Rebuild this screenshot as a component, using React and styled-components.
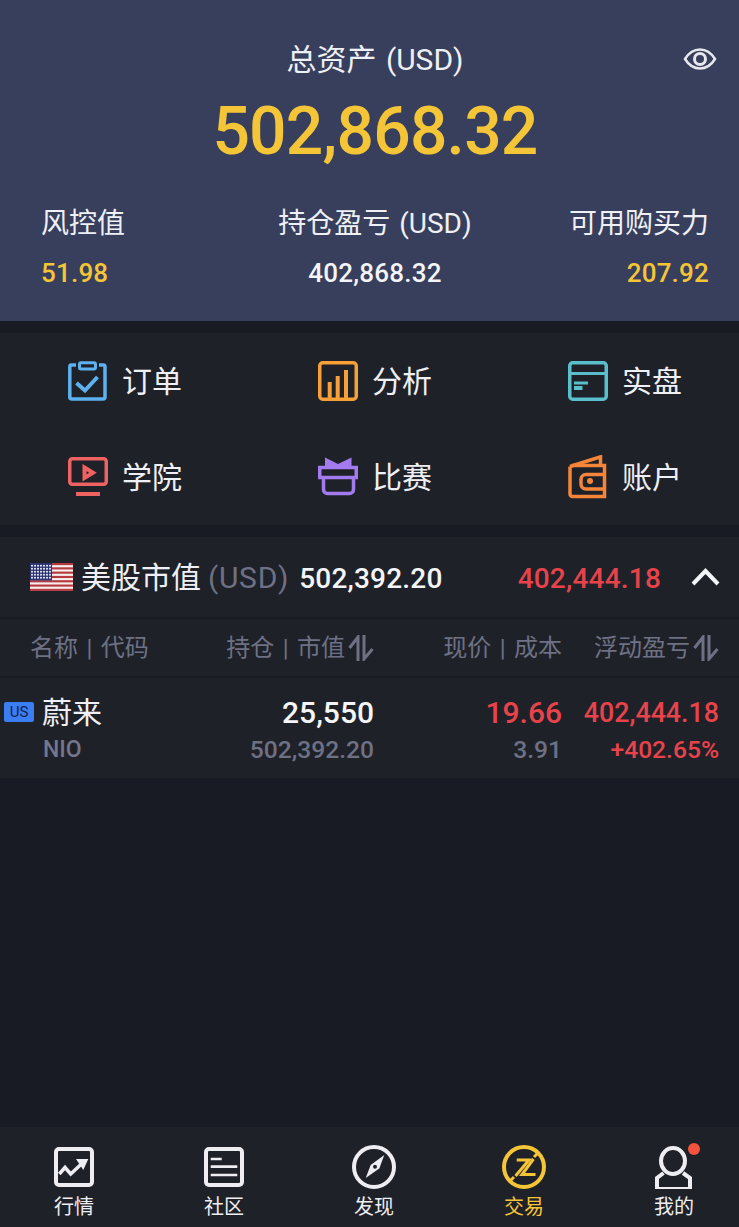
import styled, { createGlobalStyle } from "styled-components";

const RED = "#e8434a";
const GOLD = "#f5c538";
const GRAY = "#6e7184";
const PANEL = "#1f2129";

const GlobalCSS = createGlobalStyle`
    html, body {
        margin: 0;
        padding: 0;
        background: #191b24;
    }
    body {
        font-family: Roboto, "Noto Sans CJK SC", sans-serif;
        overflow: hidden;
    }
`;

const PageCSS = styled.div`
    display: flex;
    flex-direction: column;
    width: 739px;
    height: 1227px;
    background: #191b24;
`;

/* top summary */
const SummaryCSS = styled.header`
    position: relative;
    box-sizing: border-box;
    height: 321px;
    padding: 38px 30px 0 41px;
    background: #383f5c;
    color: #eef0f5;
    text-align: center;
`;
const SummaryTitle = styled.div`
    font-size: 30px;
    line-height: 44px;
    word-spacing: 2px;
`;
const BigNumber = styled.div`
    margin-top: 12px;
    font-size: 66px;
    line-height: 76px;
    font-weight: 500;
    letter-spacing: -0.8px;
    color: ${GOLD};
`;
const EyeIcon = styled.svg`
    position: absolute;
    top: 42px;
    left: 683px;
`;
const StatsRow = styled.div`
    display: grid;
    grid-template-columns: 1fr 1fr 1fr;
    margin-top: 34px;
`;
const StatCell = styled.div`
    text-align: ${(p) => p.$align};
    white-space: nowrap;
`;
const StatLabel = styled.div`
    font-size: 28px;
    line-height: 40px;
    word-spacing: 2px;
`;
const StatValue = styled.div`
    margin-top: 9px;
    font-size: 26px;
    line-height: 40px;
    font-weight: 500;
    letter-spacing: 0.2px;
    color: ${(p) => p.$color};
`;

/* shortcut grid */
const MenuGrid = styled.nav`
    display: grid;
    grid-template-columns: 250px 250px 1fr;
    grid-auto-rows: 96px;
    margin-top: 12px;
    padding-left: 68px;
    background: ${PANEL};
`;
const MenuItem = styled.div`
    display: flex;
    align-items: center;
    font-size: 30px;
    color: #eef0f5;
`;
const MenuIconBox = styled.div`
    display: flex;
    align-items: center;
    width: 40px;
    height: 44px;
    margin-right: 14px;
`;
const MenuLabel = styled.span`
    margin-bottom: 4px;
`;

/* positions */
const PositionsCSS = styled.section`
    margin-top: 12px;
    background: ${PANEL};
`;
const MarketRow = styled.div`
    display: flex;
    align-items: center;
    box-sizing: border-box;
    height: 82px;
    padding: 0 19px 0 30px;
    border-bottom: 2px solid #191b22;
`;
const MarketName = styled.span`
    margin: 0 0 4px 8px;
    font-size: 30px;
    color: #eef0f5;
`;
const MarketCurrency = styled.span`
    margin-left: 7px;
    font-size: 30px;
    letter-spacing: 0.7px;
    color: ${GRAY};
`;
const MarketValue = styled.span`
    margin: 3px 0 0 10px;
    font-size: 28px;
    font-weight: 500;
    letter-spacing: 0.2px;
    color: #f4f5f8;
`;
const MarketProfit = styled.span`
    margin: 3px 0 0 auto;
    font-size: 28px;
    font-weight: 500;
    letter-spacing: 0.2px;
    color: ${RED};
`;
const Chevron = styled.svg`
    margin-left: 30px;
`;
const TableGrid = styled.div`
    display: grid;
    grid-template-columns: 200px 174px 188px 157px;
    box-sizing: border-box;
    padding-right: 20px;
    height: ${(p) => p.$height}px;
    align-items: center;
    border-bottom: ${(p) => (p.$line ? "2px solid #191b22" : "none")};
`;
const HeadCell = styled.div`
    display: flex;
    align-items: center;
    justify-content: ${(p) => (p.$left ? "flex-start" : "flex-end")};
    padding-left: ${(p) => (p.$left ? "30px" : "0")};
    font-size: 24px;
    word-spacing: 2.5px;
    color: ${GRAY};
    white-space: nowrap;
`;
const HeadLabel = styled.span`
    margin-bottom: 4px;
`;
const SortIcon = styled.svg`
    margin-left: 3px;
`;
const NameCell = styled.div`
    position: relative;
    padding: 3px 0 0 42px;
`;
const MarketBadge = styled.span`
    position: absolute;
    left: 4px;
    top: 12px;
    width: 30px;
    height: 20px;
    border-radius: 2px;
    background: #3b7df2;
    color: #10234f;
    font-size: 15px;
    line-height: 20px;
    text-align: center;
`;
const StockName = styled.div`
    font-size: 30px;
    line-height: 40px;
    color: #eef0f5;
`;
const StockCode = styled.div`
    margin-left: 1px;
    font-size: 23px;
    line-height: 34px;
    font-weight: 500;
    color: #74778b;
`;
const NumberCell = styled.div`
    padding-top: 4px;
    text-align: right;
    white-space: nowrap;
`;
const MainNumber = styled.div`
    font-size: ${(p) => p.$size}px;
    line-height: 40px;
    font-weight: 500;
    color: ${(p) => p.$color};
`;
const SubNumber = styled.div`
    font-size: 24.6px;
    line-height: 34px;
    font-weight: 500;
    color: ${(p) => p.$color};
`;

/* tab bar */
const Spacer = styled.div`
    flex: 1;
`;
const TabBar = styled.nav`
    display: grid;
    grid-template-columns: repeat(5, 44px);
    gap: 106px;
    box-sizing: border-box;
    height: 100px;
    padding-left: 52px;
    background: ${PANEL};
`;
const Tab = styled.div`
    position: relative;
    display: flex;
    flex-direction: column;
    align-items: center;
    padding-top: 18px;
    font-size: 20px;
    line-height: 28px;
    color: ${(p) => (p.$active ? GOLD : "#eeeef2")};
`;
const TabIconBox = styled.div`
    display: flex;
    align-items: center;
    justify-content: center;
    height: 44px;
    margin-bottom: 4px;
`;
const TabDot = styled.span`
    position: absolute;
    top: 16px;
    left: 36px;
    width: 12px;
    height: 12px;
    border-radius: 50%;
    background: #f4533d;
`;

const OrderIcon = () => (
    <svg width="40" height="40" viewBox="0 0 40 40" fill="none" stroke="#5db1ef" strokeWidth="3.5">
        <path d="M8 4H3.5a1.7 1.7 0 0 0-1.7 1.7V36a2 2 0 0 0 2 2H35a2 2 0 0 0 2-2V5.7A1.7 1.7 0 0 0 35.300 4H31" />
        <rect x="11.500" y="1.700" width="16" height="6.300" rx="1.500" strokeWidth="3" />
        <path d="M8.500 22L17 29.500L29.500 16" strokeWidth="4" />
    </svg>
);
const ChartIcon = () => (
    <svg width="40" height="40" viewBox="0 0 40 40" fill="none" stroke="#f6a037" strokeWidth="3.5">
        <rect x="1.750" y="1.750" width="36.500" height="36.500" rx="3" />
        <path d="M11.700 38V21M19.700 38V15M28 38V9" strokeWidth="4" />
    </svg>
);
const LedgerIcon = () => (
    <svg width="40" height="40" viewBox="0 0 40 40" fill="none" stroke="#5bbfcb" strokeWidth="3.500">
        <rect x="1.750" y="1.750" width="36.500" height="36.500" rx="3" />
        <path d="M2 12.500H38" strokeWidth="3" />
        <path d="M6 22H20" strokeWidth="3" />
        <path d="M6 27H14.500" strokeWidth="4" />
    </svg>
);
const ScreenIcon = () => (
    <svg width="40" height="40" viewBox="0 0 40 40" fill="none" stroke="#ee6262" strokeWidth="3.500">
        <rect x="1.750" y="1.750" width="36.500" height="25.500" rx="2.500" />
        <path d="M16.500 10.500L25 15.700L16.500 21Z" strokeWidth="4" />
        <path d="M8 37H32" strokeWidth="4" />
    </svg>
);
const GiftIcon = () => (
    <svg width="40" height="40" viewBox="0 0 40 40" fill="none" stroke="#a37bee" strokeWidth="3.500">
        <path d="M7 0.500L20 7L33.500 0.500V9.500H7Z" fill="#a37bee" stroke="none" />
        <rect x="1.750" y="10.500" width="36.500" height="10" />
        <path d="M5.500 20V32.500a4 4 0 0 0 4 4H31.500a4 4 0 0 0 4-4V20" />
    </svg>
);
const WalletIcon = () => (
    <svg width="40" height="44" viewBox="0 0 40 44" fill="none" stroke="#f58539" strokeWidth="3.500">
        <path d="M2 11.500L32.500 1.800V11" />
        <path d="M2 11.500V39a2.500 2.500 0 0 0 2.500 2.500H36.500V10.500H4" />
        <path d="M37 19.500H18a5 5 0 0 0-5 5V29a5 5 0 0 0 5 5H37" />
        <circle cx="22" cy="26" r="3" fill="#f58539" stroke="none" />
    </svg>
);

const menu = [
    { label: "订单", Icon: OrderIcon },
    { label: "分析", Icon: ChartIcon },
    { label: "实盘", Icon: LedgerIcon },
    { label: "学院", Icon: ScreenIcon },
    { label: "比赛", Icon: GiftIcon },
    { label: "账户", Icon: WalletIcon },
];

const TrendIcon = () => (
    <svg width="40" height="40" viewBox="0 0 40 40" fill="none" stroke="#eeeef2" strokeWidth="4">
        <rect x="2" y="2" width="36" height="36" rx="3" />
        <path d="M5.300 27L11 20.500L16.700 27L29 15.500" strokeWidth="3.500" />
        <path d="M22 12H34.300L29.300 23Z" fill="#eeeef2" stroke="none" />
    </svg>
);
const FeedIcon = () => (
    <svg width="40" height="40" viewBox="0 0 40 40" fill="none" stroke="#eeeef2" strokeWidth="4">
        <rect x="2" y="2" width="36" height="36" rx="3" />
        <path d="M6.700 12H17.700M6.700 19.700H33.300M6.700 28H33.300" strokeWidth="2.700" />
    </svg>
);
const CompassIcon = () => (
    <svg width="44" height="44" viewBox="0 0 44 44" fill="none">
        <circle cx="22" cy="22" r="20" stroke="#eeeef2" strokeWidth="4" />
        <path d="M32.300 10L27.300 23.500L13.700 33L18.700 20Z" fill="#eeeef2" />
        <circle cx="23" cy="21.700" r="2" fill={PANEL} />
    </svg>
);
const TradeIcon = () => (
    <svg width="44" height="44" viewBox="0 0 44 44" fill="none" stroke={GOLD}>
        <circle cx="22" cy="22" r="20" strokeWidth="4" />
        <path d="M7 37L12 32M32 12L37 7" strokeWidth="3" />
        <path d="M14.700 15H27L13.500 31" strokeWidth="3" />
        <path d="M31.500 14L20 29.500H33.500" strokeWidth="3" />
    </svg>
);
const UserIcon = () => (
    <svg width="40" height="44" viewBox="0 0 40 44" fill="none" stroke="#eeeef2" strokeWidth="4">
        <ellipse cx="19" cy="16" rx="12" ry="13" />
        <path d="M9.500 28L3 33V44H36V33L29 28" />
    </svg>
);

const tabs = [
    { label: "行情", Icon: TrendIcon },
    { label: "社区", Icon: FeedIcon },
    { label: "发现", Icon: CompassIcon },
    { label: "交易", Icon: TradeIcon, active: true },
    { label: "我的", Icon: UserIcon, dot: true },
];

const stripes = [0, 1, 2, 3, 4, 5, 6];

const UsFlag = () => (
    <svg width="43" height="28" viewBox="0 0 43 28">
        <rect width="43" height="28" rx="1.500" fill="#f5f0ee" />
        {stripes.map((i) => (
            <rect key={i} y={i * 4.300} width="43" height="2.150" fill="#b5393f" />
        ))}
        <rect width="22" height="17.500" fill="#2c3270" />
        {[2, 5, 8, 11, 14].map((y) =>
            [2, 5, 8, 11, 14, 17, 20].map((x) => <circle key={x + "-" + y} cx={x} cy={y + 0.8} r="1" fill="#eef0f8" />)
        )}
    </svg>
);

const SortArrows = () => (
    <SortIcon width="26" height="26" viewBox="0 0 26 26" fill="none" stroke={GRAY} strokeWidth="3">
        <path d="M1.500 13L10 2V26" />
        <path d="M16 0V24L24.500 14" />
    </SortIcon>
);

function App() {
    return (
        <PageCSS>
            <GlobalCSS />
            <SummaryCSS>
                <SummaryTitle>总资产 (USD)</SummaryTitle>
                <EyeIcon width="34" height="34" viewBox="0 0 34 34" fill="none" stroke="#e6e8ee" strokeWidth="2.500">
                    <path d="M2 17C6 10.500 11 7.500 17 7.500S28 10.500 32 17C28 23.500 23 26.500 17 26.500S6 23.500 2 17Z" />
                    <circle cx="17" cy="17" r="5.500" strokeWidth="3" />
                </EyeIcon>
                <BigNumber>502,868.32</BigNumber>
                <StatsRow>
                    <StatCell $align="left">
                        <StatLabel>风控值</StatLabel>
                        <StatValue $color={GOLD}>51.98</StatValue>
                    </StatCell>
                    <StatCell $align="center">
                        <StatLabel>持仓盈亏 (USD)</StatLabel>
                        <StatValue $color="#f4f5f8">402,868.32</StatValue>
                    </StatCell>
                    <StatCell $align="right">
                        <StatLabel>可用购买力</StatLabel>
                        <StatValue $color={GOLD}>207.92</StatValue>
                    </StatCell>
                </StatsRow>
            </SummaryCSS>

            <MenuGrid>
                {menu.map(({ label, Icon }) => (
                    <MenuItem key={label}>
                        <MenuIconBox>
                            <Icon />
                        </MenuIconBox>
                        <MenuLabel>{label}</MenuLabel>
                    </MenuItem>
                ))}
            </MenuGrid>

            <PositionsCSS>
                <MarketRow>
                    <UsFlag />
                    <MarketName>美股市值</MarketName>
                    <MarketCurrency>(USD)</MarketCurrency>
                    <MarketValue>502,392.20</MarketValue>
                    <MarketProfit>402,444.18</MarketProfit>
                    <Chevron width="29" height="18" viewBox="0 0 29 18" fill="none" stroke="#f4f5f8" strokeWidth="4">
                        <path d="M2 16L14.500 3L27 16" />
                    </Chevron>
                </MarketRow>
                <TableGrid $height={59} $line>
                    <HeadCell $left>
                        <HeadLabel>名称 | 代码</HeadLabel>
                    </HeadCell>
                    <HeadCell>
                        <HeadLabel>持仓 | 市值</HeadLabel>
                        <SortArrows />
                    </HeadCell>
                    <HeadCell>
                        <HeadLabel>现价 | 成本</HeadLabel>
                    </HeadCell>
                    <HeadCell>
                        <HeadLabel>浮动盈亏</HeadLabel>
                        <SortArrows />
                    </HeadCell>
                </TableGrid>
                <TableGrid $height={100}>
                    <NameCell>
                        <MarketBadge>US</MarketBadge>
                        <StockName>蔚来</StockName>
                        <StockCode>NIO</StockCode>
                    </NameCell>
                    <NumberCell>
                        <MainNumber $size={30} $color="#f4f5f8">25,550</MainNumber>
                        <SubNumber $color={GRAY}>502,392.20</SubNumber>
                    </NumberCell>
                    <NumberCell>
                        <MainNumber $size={30} $color={RED}>19.66</MainNumber>
                        <SubNumber $color={GRAY}>3.91</SubNumber>
                    </NumberCell>
                    <NumberCell>
                        <MainNumber $size={26.8} $color={RED}>402,444.18</MainNumber>
                        <SubNumber $color={RED}>+402.65%</SubNumber>
                    </NumberCell>
                </TableGrid>
            </PositionsCSS>

            <Spacer />

            <TabBar>
                {tabs.map(({ label, Icon, active, dot }) => (
                    <Tab key={label} $active={active}>
                        <TabIconBox>
                            <Icon />
                        </TabIconBox>
                        {dot && <TabDot />}
                        {label}
                    </Tab>
                ))}
            </TabBar>
        </PageCSS>
    );
}

export default App;
